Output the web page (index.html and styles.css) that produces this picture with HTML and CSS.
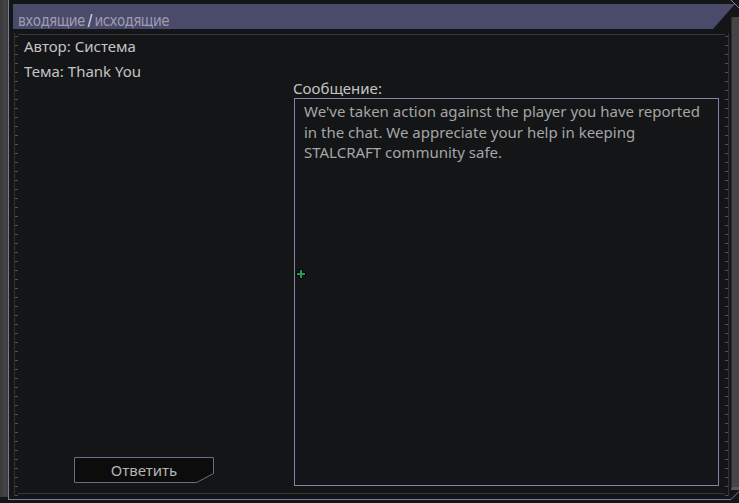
FILE: index.html
```html
<!DOCTYPE html>
<html lang="ru">
<head>
<meta charset="utf-8">
<title>Почта</title>
<link rel="stylesheet" href="styles.css">
</head>
<body>
<div class="window">
  <div class="strip-left"></div>
  <div class="frame"></div>
  <div class="titlebar"><span class="tab">входящие</span><span class="sep">/</span><span class="tab">исходящие</span></div>
  <div class="corner-top"><svg width="8" height="17" viewBox="0 0 8 17"><line x1="0" y1="0" x2="8" y2="8" stroke="#8a8aa8" stroke-width="1"/></svg></div>
  <div class="strip-right"></div>
  <div class="corner-bottom"><svg width="8" height="10" viewBox="0 0 8 10"><line x1="0" y1="9.5" x2="8" y2="1.5" stroke="#7a7a9c" stroke-width="1"/></svg></div>
  <div class="content">
    <div class="panel">
      <div class="sheet">
        <div class="info">
          <div class="meta">
            <div>Автор: Система</div>
            <div>Тема: Thank You</div>
          </div>
          <button class="reply" type="button">
            <svg class="reply-shape" width="140" height="26" viewBox="0 0 140 26"><polygon points="0.5,0.5 139.5,0.5 139.5,16.5 122.5,25.5 0.5,25.5" fill="#0c0c0d" stroke="#6c6c84" stroke-width="1"/></svg>
            <span class="reply-label">Ответить</span>
          </button>
        </div>
        <div class="message">
          <div class="label">Сообщение:</div>
          <div class="msgbox">We've taken action against the player you have reported in the chat. We appreciate your help in keeping STALCRAFT community safe.
            <svg class="cursor" width="10" height="10" viewBox="0 0 10 10"><path d="M3 0H7V3H10V7H7V10H3V7H0V3H3Z" fill="#050505"/><path d="M4 1H6V4H9V6H6V9H4V6H1V4H4Z" fill="#1f9e50"/></svg>
          </div>
        </div>
      </div>
    </div>
  </div>
</div>
</body>
</html>
```
FILE: styles.css
```css
html, body {
  margin: 0;
  padding: 0;
  background: #16171a;
}

.window {
  width: 739px;
  height: 503px;
  display: grid;
  grid-template-columns: 8px 1fr 8px;
  grid-template-rows: 4px 13px 12px 1fr 10px 3px;
  background: #141517;
  font-family: "Noto Sans", "Open Sans", sans-serif;
  font-size: 15px;
  color: #c4c4c4;
  overflow: hidden;
}

.strip-left {
  grid-column: 1;
  grid-row: 1 / 6;
  background: linear-gradient(to right, #3a3a3a, #444 70%, #3a3a3c);
  margin-bottom: 3px;
}

.frame {
  grid-column: 2;
  grid-row: 1 / 6;
  border-left: 1px solid #7a7a9c;
  border-bottom: 1px solid #7a7a9c;
}

.titlebar {
  grid-column: 2 / 4;
  grid-row: 2 / 4;
  margin-left: 5px;
  margin-right: 4px;
  background: #4a4a6a;
  clip-path: polygon(0 0, 100% 0, calc(100% - 22px) 100%, 0 100%);
  display: flex;
  align-items: center;
  padding-left: 5px;
  padding-top: 9px;
  color: #9c9cb4;
  font-family: "DejaVu Sans Condensed", "DejaVu Sans", sans-serif;
  font-size: 15px;
  letter-spacing: -0.6px;
}

.sep {
  color: #e2e2ea;
  margin: 0 3px 0 3px;
}

.corner-top {
  grid-column: 3;
  grid-row: 1 / 3;
  line-height: 0;
}

.strip-right {
  grid-column: 3;
  grid-row: 3 / 5;
  background: #454545;
  border-left: 1px solid #2e2e2e;
  border-bottom: 3px solid #5a5a5a;
}

.corner-bottom {
  grid-column: 3;
  grid-row: 5;
  line-height: 0;
}

.content {
  grid-column: 2;
  grid-row: 4 / 6;
  padding: 4px 2px 4px 6px;
  display: flex;
  min-height: 0;
}

.panel {
  flex: 1;
  display: flex;
  border-left: 1px solid #333336;
  border-right: 1px solid #333336;
  padding: 1px 3px 2px 3px;
  background:
    repeating-linear-gradient(to bottom, transparent 0 3px, #505054 3px 4px, transparent 4px 9px) left top / 3px 100% no-repeat,
    repeating-linear-gradient(to bottom, transparent 0 3px, #505054 3px 4px, transparent 4px 9px) right top / 3px 100% no-repeat;
}

.sheet {
  flex: 1;
  border-top: 1px solid #38383c;
  border-bottom: 1px solid #38383c;
  display: grid;
  grid-template-columns: 1fr 426px;
  padding: 0 6px 7px 6px;
}

.info {
  display: flex;
  flex-direction: column;
  justify-content: space-between;
}

.meta {
  line-height: 24.5px;
  margin-top: -1px;
}

.reply {
  position: relative;
  width: 140px;
  height: 26px;
  margin: 0 0 3px 50px;
  padding: 0;
  border: none;
  background: transparent;
  font: inherit;
  color: #b4b4b4;
  cursor: pointer;
}

.reply-shape {
  position: absolute;
  left: 0;
  top: 0;
}

.reply-label {
  position: relative;
  line-height: 26px;
}

.message {
  display: flex;
  flex-direction: column;
}

.label {
  margin-top: 43px;
  line-height: 20px;
  color: #c4c4c4;
}

.msgbox {
  position: relative;
  flex: 1;
  margin-left: 1px;
  border: 1px solid #8282aa;
  padding: 2px 8px 0 9px;
  line-height: 20.5px;
  color: #a6a6a6;
}

.cursor {
  position: absolute;
  left: 1px;
  top: 170px;
}
```
